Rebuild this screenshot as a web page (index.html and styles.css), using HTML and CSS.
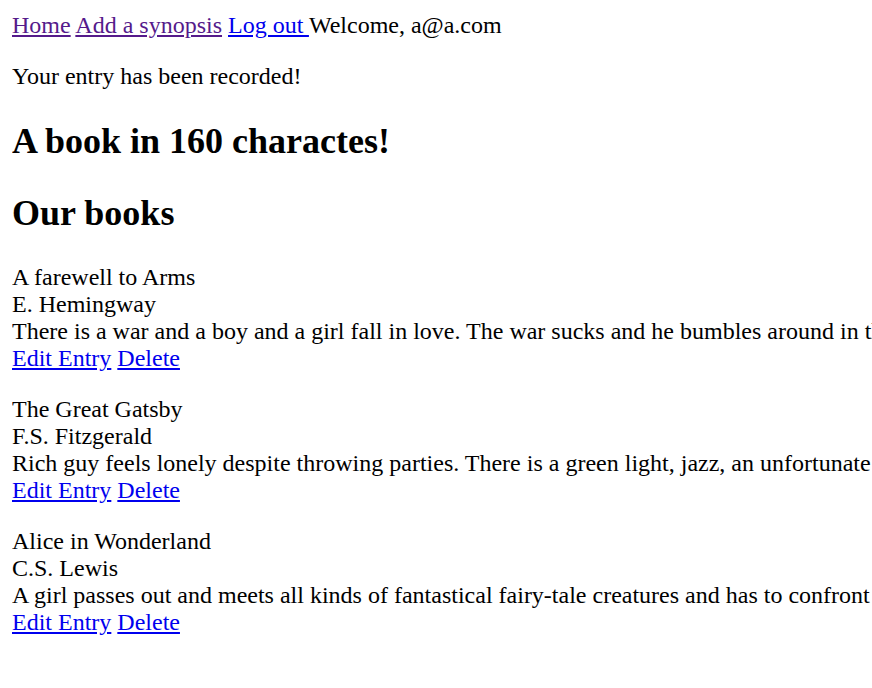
FILE: index.html
```html
<!DOCTYPE html>
<html>
<head>
<meta charset="utf-8">
<link rel="stylesheet" href="styles.css">
</head>
<body>
<div class="nav"><a class="link visited" href="#">Home</a> <a class="link visited" href="#">Add a synopsis</a> <a class="link" href="#">Log out </a> Welcome, a@a.com</div>
<p class="para">Your entry has been recorded!</p>
<h2 class="heading">A book in 160 charactes!</h2>
<h2 class="heading">Our books</h2>
<p class="entry">A farewell to Arms<br>E. Hemingway<br>There is a war and a boy and a girl fall in love. The war sucks and he bumbles around in the rain while she waits.<br><a class="link" href="#">Edit Entry</a> <a class="link" href="#">Delete</a></p>
<p class="entry">The Great Gatsby<br>F.S. Fitzgerald<br>Rich guy feels lonely despite throwing parties. There is a green light, jazz, an unfortunate car accident and a pool.<br><a class="link" href="#">Edit Entry</a> <a class="link" href="#">Delete</a></p>
<p class="entry">Alice in Wonderland<br>C.S. Lewis<br>A girl passes out and meets all kinds of fantastical fairy-tale creatures and has to confront the queen of hearts.<br><a class="link" href="#">Edit Entry</a> <a class="link" href="#">Delete</a></p>
</body>
</html>
```
FILE: styles.css
```css
html {
  overflow: hidden;
}
body {
  margin: 12px 0 12px 12px;
  font-family: "Liberation Serif", "Times New Roman", serif;
  font-size: 24px;
  color: #000;
  background: #fff;
}
.nav {
  white-space: nowrap;
}
.link {
  color: #0000ee;
  text-decoration: underline;
}
.link.visited {
  color: #551a8b;
}
.para {
  margin: 24px 0;
}
.heading {
  font-size: 36px;
  font-weight: bold;
  margin: 30px 0;
}
.entry {
  margin: 24px 0;
  white-space: nowrap;
  overflow: hidden;
}
```
